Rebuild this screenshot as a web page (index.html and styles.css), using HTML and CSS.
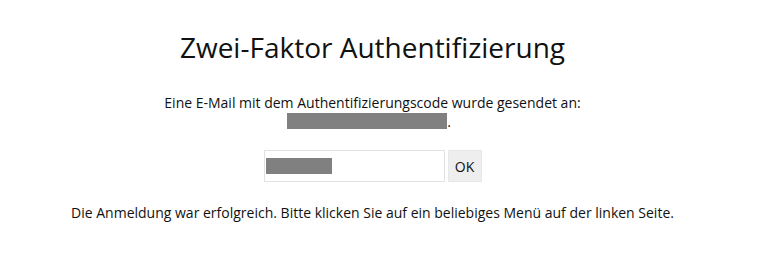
FILE: index.html
```html
<!DOCTYPE html>
<html lang="de">
<head>
<meta charset="utf-8">
<link rel="stylesheet" href="styles.css">
</head>
<body>
<main class="page">
  <h1 class="title">Zwei-Faktor Authentifizierung</h1>
  <p class="info">Eine E-Mail mit dem Authentifizierungscode wurde gesendet an:<br><span class="redact"></span><span class="dot">.</span></p>
  <form class="code-form">
    <div class="code-input"><span class="redact-small"></span></div>
    <button type="button" class="ok">OK</button>
  </form>
  <p class="success">Die Anmeldung war erfolgreich. Bitte klicken Sie auf ein beliebiges Menü auf der linken Seite.</p>
</main>
</body>
</html>
```
FILE: styles.css
```css
html, body {
  margin: 0;
  padding: 0;
  background: #fff;
}
body {
  font-family: "Open Sans", "Liberation Sans", sans-serif;
  color: #111;
}
.page {
  width: 745px;
  display: flex;
  flex-direction: column;
  align-items: center;
  padding-top: 28px;
}
.title {
  margin: 0;
  font-size: 28px;
  font-weight: 400;
  line-height: 38px;
}
.info {
  margin: 27px 0 0;
  font-size: 14px;
  line-height: 19px;
  text-align: center;
}
.redact {
  display: inline-block;
  width: 160px;
  height: 16px;
  margin-top: 1px;
  background: #808080;
  vertical-align: top;
}
.dot {
  padding-right: 7px;
}
.code-form {
  display: flex;
  gap: 3px;
  margin-top: 19px;
}
.code-input {
  width: 178px;
  height: 30px;
  border: 1px solid #e2e2e2;
  background: #fff;
  display: flex;
  align-items: center;
  padding-left: 1px;
}
.redact-small {
  width: 66px;
  height: 16px;
  background: #808080;
}
.ok {
  width: 34px;
  height: 32px;
  border: 1px solid #e8e8e8;
  background: #eeeeee;
  font-family: inherit;
  font-size: 14px;
  color: #111;
  padding: 0;
}
.success {
  margin: 21px 0 0;
  font-size: 14px;
  line-height: 19px;
}
```
